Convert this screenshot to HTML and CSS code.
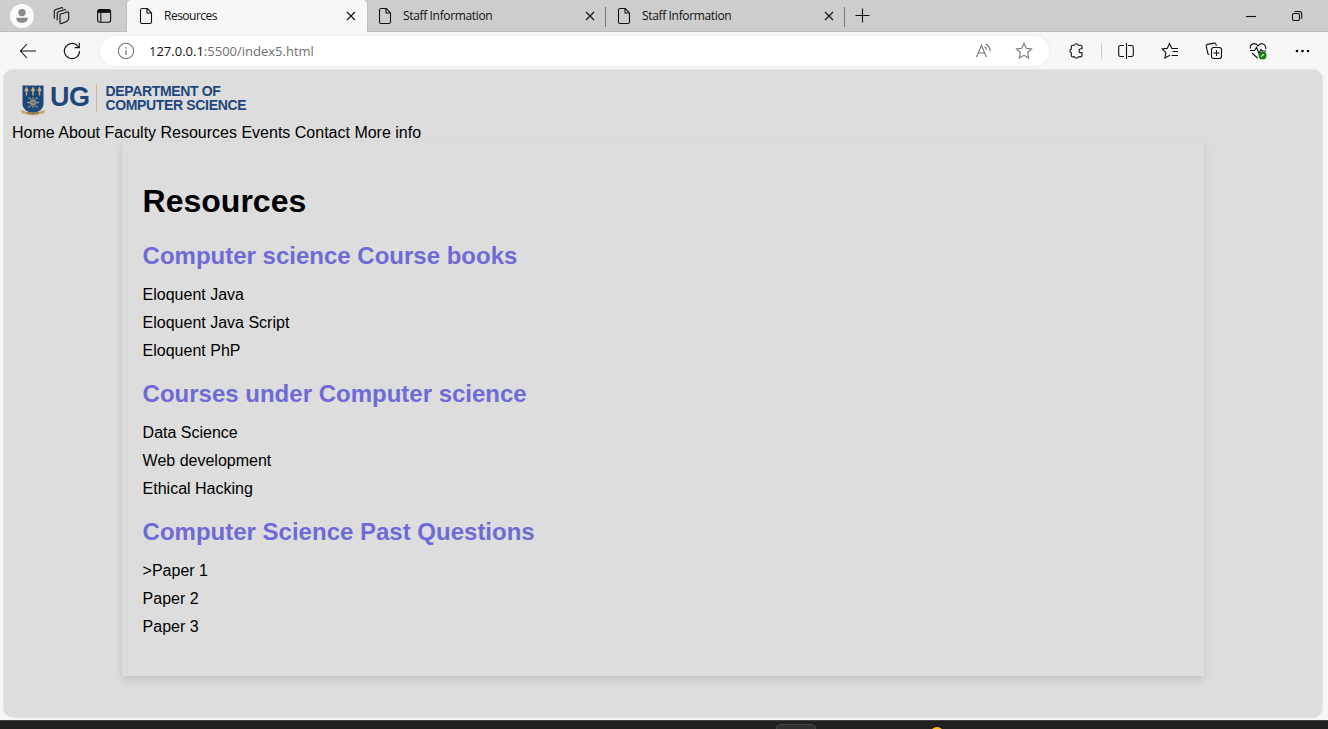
FILE: index.html
```html
<!DOCTYPE html>
<html lang="en">
<head>
<meta charset="utf-8">
<title>Resources</title>
<link rel="stylesheet" href="styles.css">
</head>
<body>
<div class="browser">
  <div class="tabbar">
    <div class="tools">
      <svg width="24" height="24" viewBox="0 0 24 24"><circle cx="12" cy="12" r="12" fill="#fafafa"/><circle cx="12" cy="8.6" r="3.7" fill="#8a8a8a"/><path d="M6.3 13.8h11.4c.2 3-2 5.1-5.7 5.1s-5.9-2.1-5.7-5.1z" fill="#8a8a8a"/></svg>
      <svg class="line" width="18" height="18" viewBox="0 0 18 18"><path d="M8.2 7.2 15.2 5q1.5-.4 1.5 1v6l-2 2.6-5.2 2q-1.5.5-1.5-1V8.2zM5.2 13.5V6l1-1.3 6-2q1.3-.4 1.5.8M2.3 11.5V4l1-1.3 6-2q1.3-.4 1.5.8"/></svg>
      <svg class="line" width="16" height="16" viewBox="0 0 16 16"><rect x="1.6" y="1.6" width="13" height="12.6" rx="2"/><path d="M2 3.4h12.4" stroke-width="3"/><path d="M4.8 4v10"/></svg>
    </div>
    <div class="tab active">
      <svg class="line doc" width="14" height="18" viewBox="0 0 14 18"><path d="M2.5 1.5h5.8l4.2 4.4v9q0 1.6-1.6 1.6H3q-1.5 0-1.5-1.6V3q0-1.5 1.5-1.5zM8 1.8V6h4.2"/></svg>
      <span class="title">Resources</span>
      <svg class="line" width="10" height="10" viewBox="0 0 10 10"><path d="M1 1l8 8M9 1l-8 8"/></svg>
    </div>
    <div class="tab">
      <svg class="line doc" width="14" height="18" viewBox="0 0 14 18"><path d="M2.5 1.5h5.8l4.2 4.4v9q0 1.6-1.6 1.6H3q-1.5 0-1.5-1.6V3q0-1.5 1.5-1.5zM8 1.8V6h4.2"/></svg>
      <span class="title">Staff Information</span>
      <svg class="line" width="10" height="10" viewBox="0 0 10 10"><path d="M1 1l8 8M9 1l-8 8"/></svg>
    </div>
    <div class="tab">
      <svg class="line doc" width="14" height="18" viewBox="0 0 14 18"><path d="M2.5 1.5h5.8l4.2 4.4v9q0 1.6-1.6 1.6H3q-1.5 0-1.5-1.6V3q0-1.5 1.5-1.5zM8 1.8V6h4.2"/></svg>
      <span class="title">Staff Information</span>
      <svg class="line" width="10" height="10" viewBox="0 0 10 10"><path d="M1 1l8 8M9 1l-8 8"/></svg>
    </div>
    <svg class="line plus" width="15" height="15" viewBox="0 0 15 15"><path d="M7.5 .5v14M.5 7.5h14"/></svg>
    <div class="window">
      <svg class="line" width="10" height="10" viewBox="0 0 10 10"><path d="M0 5.5h10"/></svg>
      <svg class="line" width="12" height="12" viewBox="0 0 12 12"><rect x="1.5" y="3.5" width="7" height="7" rx="1.5"/><path d="M3.5 1.5h4.8q2.4 0 2.4 2.4v4.8"/></svg>
    </div>
  </div>
  <div class="toolbar">
    <svg class="line back" width="18" height="16" viewBox="0 0 18 16"><path d="M8 1 1.5 8 8 15M1.5 8h15.5"/></svg>
    <svg class="line reload" width="18" height="18" viewBox="0 0 18 18"><path d="M16.6 9A7.6 7.6 0 1 1 14.8 4.1l1.3 1.4M16.3 1v4.6h-4.6"/></svg>
    <div class="address">
      <svg class="line grey" width="18" height="18" viewBox="0 0 18 18"><circle cx="9" cy="9" r="7.7"/><path d="M9 8v5M9 5v1.6" stroke-width="1.3"/></svg>
      <span class="url"><span class="host">127.0.0.1</span>:5500/index5.html</span>
      <svg class="line grey" width="18" height="16" viewBox="0 0 18 16"><path d="M1.5 14 6.5 2.2 11.3 14M3.2 10h6.3M9.5 3.5q2 1.2 1.9 3.6M10.8.9q4 2.1 4.3 7.1"/></svg>
      <svg class="line grey star" width="18" height="18" viewBox="0 0 18 18"><path d="M9 1.5 11.2 6.3 16.5 6.9 12.6 10.5 13.6 15.9 9 13.3 4.4 15.9 5.4 10.5 1.500 6.900 6.800 6.300z"/></svg>
    </div>
    <div class="actions">
      <svg class="line" width="18" height="18" viewBox="0 0 18 18"><path d="M5.500 3.200h2a2 2 0 0 1 3.800 0h2.200q1.500 0 1.500 1.500v2h-1a2 2 0 0 0 0 4h1v2.700q0 1.500-1.500 1.500h-2.200a2 2 0 0 1-3.800 0H5.800q-1.500 0-1.500-1.500v-2.600a2 2 0 0 1 0-3.800V4.700q0-1.500 1.200-1.500z"/></svg>
      <i class="divider"></i>
      <svg class="line" width="18" height="18" viewBox="0 0 18 18"><path d="M7 3.500H3.500q-1.800 0-1.800 1.800v7.400q0 1.800 1.800 1.800H7M11 3.500h3.500q1.800 0 1.800 1.800v7.400q0 1.800-1.800 1.800H11M9.500 1v16"/></svg>
      <svg class="line" width="18" height="18" viewBox="0 0 18 18"><path d="M10.700 6.300 8.500 1.500 6.300 6.300 1.200 7l3.700 3.600-1 5.300 5-2.700M10.500 6.500h6.500M11.500 9.500H17M10.500 13.500H17"/></svg>
      <svg class="line" width="18" height="18" viewBox="0 0 18 18"><path d="M4.200 12.500 3 12 1.200 4.300q-.3-1.500 1.200-1.900L9 1.100q1.500-.3 2 1.200l.4 1.500"/><rect x="6.500" y="5.500" width="10" height="11" rx="2.200"/><path d="M11.500 8v6M8.500 11h6"/></svg>
      <svg class="line" width="18" height="18" viewBox="0 0 18 18"><path d="M1.300 6.500C.8 1.500 6.500 0 9 4 11.500 0 17.200 1.500 16.700 7M1 8.500h4.500l2-3 2.500 6 2-4 1.200 1.500H17M3 11l5.500 5"/><circle cx="13.500" cy="13.500" r="4" fill="#128212" stroke="none"/><path d="m12 14.700 3-2.500" stroke="#fff"/></svg>
      <svg width="18" height="18" viewBox="0 0 18 18"><circle cx="4" cy="9" r="1.300"/><circle cx="9.500" cy="9" r="1.300"/><circle cx="15" cy="9" r="1.300"/></svg>
    </div>
  </div>
  <main class="page">
    <header class="brand">
      <svg class="shield" width="26" height="33" viewBox="0 0 26 33">
        <path d="M2.500 1.500h21v19q0 6-10.500 9-10.500-3-10.500-9z" fill="#1d477b"/>
        <g fill="#c6ae7d"><path d="m6.500 2.500 2.200 4-1.500 1v4H5.800v-4l-1.500-1zM13 2.500l2.200 4-1.500 1v4h-1.400v-4l-1.500-1zM19.500 2.500l2.200 4-1.500 1v4h-1.400v-4l-1.500-1z"/></g>
        <g fill="none" stroke="#a9a284" stroke-width="1"><circle cx="13" cy="18.500" r="2"/><path d="M8 14q4 0 3 3t-4 1.500M18 14q-4 0-3 3t4 1.500M8 23q4 0 3-3t-4-1.500M18 23q-4 0-3-3t4-1.500M13 13v11"/></g>
        <path d="m1 26 4.500 1.300q7.500 2.500 15 0L25 26l-1 3.200-4.500 1q-6.500 2.400-13 0l-4.500-1z" fill="#c6a467"/><path d="M7 28.700q6 1.700 12 0" stroke="#6f674f" fill="none"/>
      </svg>
      <span class="ug">UG</span>
      <i class="rule"></i>
      <span class="dept"><span>DEPARTMENT OF</span><span>COMPUTER SCIENCE</span></span>
    </header>
    <nav>Home About Faculty Resources Events Contact More info</nav>
    <section class="container">
      <h1>Resources</h1>
      <h2>Computer science Course books</h2>
      <ul><li>Eloquent Java</li><li>Eloquent Java Script</li><li>Eloquent PhP</li></ul>
      <h2>Courses under Computer science</h2>
      <ul><li>Data Science</li><li>Web development</li><li>Ethical Hacking</li></ul>
      <h2>Computer Science Past Questions</h2>
      <ul><li>&gt;Paper 1</li><li>Paper 2</li><li>Paper 3</li></ul>
    </section>
  </main>
  <footer class="taskbar"><i class="task"></i><i class="dot"></i></footer>
</div>
</body>
</html>
```
FILE: styles.css
```css
* { box-sizing: border-box; }
body { margin: 0; background: #f7f7f7; font-family: "Liberation Sans", Arial, sans-serif; }
svg { display: block; flex: none; }
.line { fill: none; stroke: #111; stroke-width: 1.1; }
.grey { stroke: #767676; }
.browser { width: 1328px; height: 729px; overflow: hidden; display: flex; flex-direction: column; }
.tabbar { height: 32px; flex: none; display: flex; align-items: center; background: #cdcdcd; border-bottom: 1px solid #bdbdbd; }
.tools { width: 127px; padding-left: 10px; display: flex; align-items: center; }
.tools svg:nth-child(2) { margin-left: 18px; }
.tools svg:nth-child(3) { margin-left: 26px; }
.tab { width: 239px; height: 32px; flex: none; display: flex; align-items: center; padding: 0 11px 0 11px; position: relative; }
.tab.active { width: 240px; padding-left: 12px; background: #f7f7f7; border-radius: 4px 4px 0 0; margin-bottom: -1px; box-shadow: 0 0 2px #999; clip-path: inset(0 -3px 0 -3px); }
.tab:not(.active)::after { content: ""; position: absolute; right: 0; top: 7px; width: 1px; height: 20px; background: #777; }
.title { flex: 1; margin-left: 11px; font: 12px/16px "Open Sans", sans-serif; color: #111; letter-spacing: -.35px; }
.tab.active .title { letter-spacing: -.5px; }
.tab.active .title { letter-spacing: -.5px; }
.plus { margin-left: 10px; }
.window { margin-left: auto; display: flex; align-items: center; gap: 35px; padding-right: 25px; }
.toolbar { height: 38px; flex: none; display: flex; align-items: center; }
.back { margin-left: 19px; }
.reload { margin-left: 26px; }
.address { width: 949px; height: 30px; margin-left: 19px; border-radius: 15px; background: #fff; display: flex; align-items: center; padding: 0 16px 0 17px; box-shadow: 0 0 3px #e4e4e4; }
.url { flex: 1; margin-left: 14px; font: 13px/18px "Open Sans", sans-serif; color: #707070; }
.host { color: #111; }
.star { margin-left: 22px; }
.actions { display: flex; align-items: center; margin-left: 18px; gap: 26px; }
.divider { width: 1px; height: 16px; background: #ccc; margin: 0 -11px 0 -10px; }
.page { width: 1318px; height: 647px; margin: 0 0 0 4px; padding: 8px; flex: none; border-radius: 9px; background: #ddd; box-shadow: 0 0 2px #bbb; }
.brand { height: 46px; display: flex; align-items: flex-start; padding: 6px 0 0 8px; color: #1d477b; font-weight: bold; }
.ug { width: 41px; margin: -1px 0 0 4px; font-size: 27px; line-height: 28px; letter-spacing: -.4px; }
.rule { width: 1px; height: 28px; margin-left: 5px; background: #c9b997; }
.dept { margin: 0 0 0 8.5px; display: flex; flex-direction: column; font-size: 14px; line-height: 14px; letter-spacing: -.35px; white-space: nowrap; }
nav { font-size: 16px; line-height: 18px; }
.container { width: 1082px; height: 534px; margin: 0 0 0 110px; padding: 20px 20px 20px 20.6px; background: #ddd; box-shadow: 0 4px 8px rgba(0,0,0,.12); }
h1 { font-size: 32px; line-height: 37px; margin: 21px 0 22px; }
h2 { font-size: 24px; line-height: 27px; margin: 0 0 17px; color: #6f6bd6; }
ul { list-style: none; margin: 0 0 20px; padding: 0; }
li { font-size: 16px; line-height: 18px; margin-bottom: 10px; }
ul li:last-child { margin-bottom: 0; }
.taskbar { height: 9px; margin-top: 3px; flex: none; background: #202020; border-top: 1px solid #444; display: flex; }
.task { width: 40px; height: 8px; margin: 3px 0 0 776px; background: #303030; border: 1px solid #444; border-radius: 4px 4px 0 0; }
.dot { width: 14px; height: 14px; border-radius: 50%; background: #fdbe0d; margin: 6px 0 0 114px; }
```
